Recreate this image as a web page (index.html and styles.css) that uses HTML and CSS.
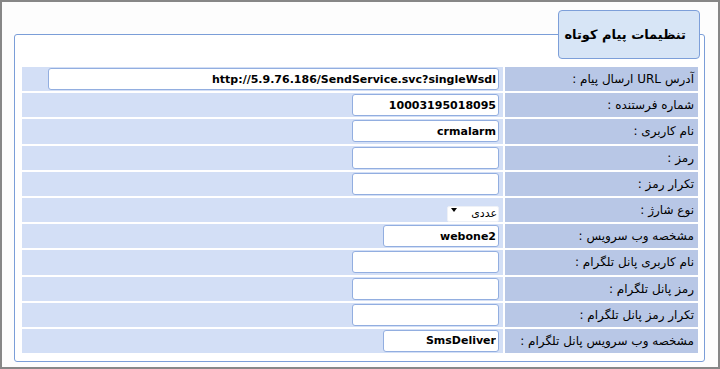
FILE: index.html
```html
<!DOCTYPE html>
<html lang="fa" dir="rtl">

<head>
    <meta charset="UTF-8">
    <meta name="viewport" content="width=device-width, initial-scale=1.0">
    <title>تنظیمات پیام کوتاه</title>
    <link rel="stylesheet" href="styles.css">
</head>

<body>
    <div class="frame">
        <fieldset class="sms-box">
            <legend class="sms-title">تنظیمات پیام کوتاه</legend>

            <!-- ستون راست: عنوان فیلد، ستون چپ: مقدار -->
            <div class="form-grid">
                <div class="label-cell">آدرس URL ارسال پیام :</div>
                <div class="field-cell"><input class="field field-wide" dir="ltr" value="http://5.9.76.186/SendService.svc?singleWsdl"></div>

                <div class="label-cell">شماره فرستنده :</div>
                <div class="field-cell"><input class="field" dir="ltr" value="10003195018095"></div>

                <div class="label-cell">نام کاربری :</div>
                <div class="field-cell"><input class="field" dir="ltr" value="crmalarm"></div>

                <div class="label-cell">رمز :</div>
                <div class="field-cell"><input class="field" type="password"></div>

                <div class="label-cell">تکرار رمز :</div>
                <div class="field-cell"><input class="field" type="password"></div>

                <div class="label-cell">نوع شارژ :</div>
                <div class="field-cell">
                    <div class="select-wrap">
                        <select class="charge-select">
                            <option>عددی</option>
                        </select>
                        <span class="select-arrow"></span>
                    </div>
                </div>

                <div class="label-cell">مشخصه وب سرویس :</div>
                <div class="field-cell"><input class="field field-short" dir="ltr" value="webone2"></div>

                <div class="label-cell">نام کاربری پانل تلگرام :</div>
                <div class="field-cell"><input class="field"></div>

                <div class="label-cell">رمز پانل تلگرام :</div>
                <div class="field-cell"><input class="field" type="password"></div>

                <div class="label-cell">تکرار رمز پانل تلگرام :</div>
                <div class="field-cell"><input class="field" type="password"></div>

                <div class="label-cell">مشخصه وب سرویس پانل تلگرام :</div>
                <div class="field-cell"><input class="field field-short" dir="ltr" value="SmsDeliver"></div>
            </div>
        </fieldset>
    </div>
</body>

</html>
```

FILE: styles.css
```css
body {
    margin: 0;
    padding: 0;
    font-family: "DejaVu Sans", sans-serif;
    color: #000;
}

.frame {
    height: 369px;
    box-sizing: border-box;
    border: 2px solid #878787;
    background-color: #fdfdfd;
    padding: 8px 13px 0 12px;
}

/* کادر تنظیمات */
.sms-box {
    margin: 0;
    border: 1px solid #7b9ed8;
    border-radius: 3px;
    background-color: #fff;
    padding: 8px 6px 8px 7px;
    min-width: 0;
}

.sms-title {
    width: 142px;
    height: 49px;
    box-sizing: border-box;
    margin-right: -2px;
    padding: 0 13px 0 0;
    border: 1px solid #7d9fd9;
    border-radius: 4px;
    background-color: #d7e5f6;
    font-size: 13px;
    font-weight: bold;
    line-height: 47px;
    text-align: right;
}

.form-grid {
    display: grid;
    grid-template-columns: 193px 1fr;
    grid-auto-rows: 24.2px;
    gap: 2px;
}

.label-cell {
    background-color: #b8c7e6;
    font-size: 12px;
    line-height: 24px;
    padding-right: 4px;
    white-space: nowrap;
}

.field-cell {
    background-color: #d3dff6;
    display: flex;
    align-items: center;
    padding-right: 4px;
}

.field {
    width: 147px;
    height: 22px;
    box-sizing: border-box;
    margin: 0;
    padding: 0 2px;
    border: 1px solid #92aee0;
    border-radius: 3px;
    background-color: #fff;
    font-family: "DejaVu Sans", sans-serif;
    font-size: 11px;
    font-weight: bold;
    text-align: right;
    color: #000;
    outline: none;
}

.field-wide {
    width: 451px;
}

.field-short {
    width: 116px;
}

.select-wrap {
    position: relative;
    width: 52px;
    height: 16px;
}

.charge-select {
    appearance: none;
    -webkit-appearance: none;
    width: 52px;
    height: 16px;
    box-sizing: border-box;
    margin: 0;
    padding: 0 1px 0 0;
    border: 1px solid #eef1f7;
    border-radius: 2px;
    background-color: #fff;
    font-family: "DejaVu Sans", sans-serif;
    font-size: 11px;
    line-height: 14px;
    color: #000;
}

/* فلش کوچک لیست */
.select-arrow {
    position: absolute;
    left: 4px;
    top: 6px;
    width: 0;
    height: 0;
    border-left: 3px solid transparent;
    border-right: 3px solid transparent;
    border-top: 4px solid #000;
    pointer-events: none;
}
```
